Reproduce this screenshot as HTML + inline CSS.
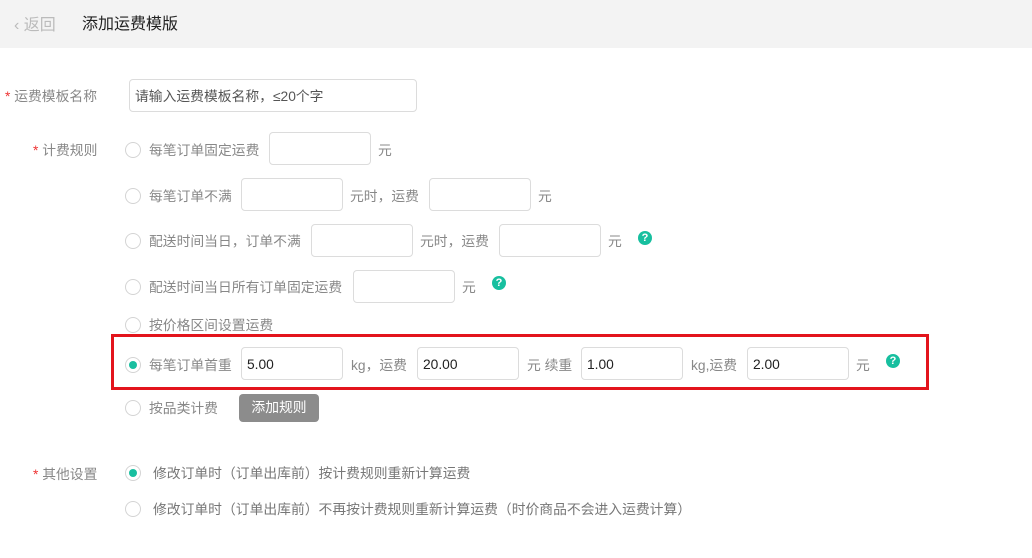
<!DOCTYPE html><html><head><meta charset="utf-8"><style>
body{margin:0;width:1032px;height:558px;background:#fff;font-family:"Liberation Sans","Noto Sans CJK SC",sans-serif;font-size:13.8px;color:#888;position:relative;overflow:hidden}
.a{position:absolute;white-space:nowrap;line-height:16px;top:0}
.hd{position:absolute;left:0;top:0;width:1032px;height:48px;background:#f3f3f3}
.in{position:absolute;box-sizing:border-box;border:1px solid #dcdcdc;border-radius:4px;height:33px;width:102px;background:#fff;color:#222;font-size:13.8px;padding-left:5px;line-height:33px}
.r{position:absolute;box-sizing:border-box;width:16px;height:16px;border:1px solid #d4d4d4;border-radius:50%;background:#fff}
.r.on::after{content:"";position:absolute;left:3px;top:3px;width:8px;height:8px;border-radius:50%;background:#19bfa0}
.q{position:absolute;width:14px;height:14px;border-radius:50%;background:#17bf9f;color:#fff;font-size:11px;font-weight:bold;text-align:center;line-height:14px}
.s{color:#e33}
</style></head><body>
<div class="hd"></div>
<div class="a" style="left:14px;top:17px;font-size:16px;color:#bbb;line-height:18px">&#8249;&nbsp;返回</div>
<div class="a" style="left:82px;top:16px;font-size:16px;color:#222;line-height:18px">添加运费模版</div>

<div class="a" style="left:5px;top:89px"><span class="s">*</span> 运费模板名称</div>
<div class="in" style="left:129px;top:79px;width:288px;color:#555">请输入运费模板名称，≤20个字</div>

<div class="a" style="left:33px;top:143px"><span class="s">*</span> 计费规则</div>

<div class="r" style="left:125px;top:142px"></div>
<div class="a" style="left:149px;top:143px">每笔订单固定运费</div>
<div class="in" style="left:269px;top:132px"></div>
<div class="a" style="left:378px;top:143px">元</div>

<div class="r" style="left:125px;top:188px"></div>
<div class="a" style="left:149px;top:189px">每笔订单不满</div>
<div class="in" style="left:241px;top:178px"></div>
<div class="a" style="left:350px;top:189px">元时，运费</div>
<div class="in" style="left:429px;top:178px"></div>
<div class="a" style="left:538px;top:189px">元</div>

<div class="r" style="left:125px;top:233px"></div>
<div class="a" style="left:149px;top:234px">配送时间当日，订单不满</div>
<div class="in" style="left:311px;top:224px"></div>
<div class="a" style="left:420px;top:234px">元时，运费</div>
<div class="in" style="left:499px;top:224px"></div>
<div class="a" style="left:608px;top:234px">元</div>
<div class="q" style="left:638px;top:231px">?</div>

<div class="r" style="left:125px;top:279px"></div>
<div class="a" style="left:149px;top:280px">配送时间当日所有订单固定运费</div>
<div class="in" style="left:353px;top:270px"></div>
<div class="a" style="left:462px;top:280px">元</div>
<div class="q" style="left:492px;top:276px">?</div>

<div class="r" style="left:125px;top:317px"></div>
<div class="a" style="left:149px;top:318px">按价格区间设置运费</div>

<div style="position:absolute;left:111px;top:334px;width:812px;height:50px;border:3px solid #e3141c"></div>
<div class="r on" style="left:125px;top:357px"></div>
<div class="a" style="left:149px;top:358px">每笔订单首重</div>
<div class="in" style="left:241px;top:347px">5.00</div>
<div class="a" style="left:351px;top:358px">kg，运费</div>
<div class="in" style="left:417px;top:347px">20.00</div>
<div class="a" style="left:527px;top:358px">元 续重</div>
<div class="in" style="left:581px;top:347px">1.00</div>
<div class="a" style="left:691px;top:358px">kg,运费</div>
<div class="in" style="left:747px;top:347px">2.00</div>
<div class="a" style="left:856px;top:358px">元</div>
<div class="q" style="left:886px;top:354px">?</div>

<div class="r" style="left:125px;top:400px"></div>
<div class="a" style="left:149px;top:401px">按品类计费</div>
<div style="position:absolute;left:239px;top:394px;width:80px;height:28px;background:#8c8c8c;border-radius:4px;color:#fff;text-align:center;line-height:28px">添加规则</div>

<div class="a" style="left:33px;top:467px"><span class="s">*</span> 其他设置</div>
<div class="r on" style="left:125px;top:465px"></div>
<div class="a" style="left:153px;top:466px;color:#777">修改订单时（订单出库前）按计费规则重新计算运费</div>
<div class="r" style="left:125px;top:501px"></div>
<div class="a" style="left:153px;top:502px;color:#777">修改订单时（订单出库前）不再按计费规则重新计算运费（时价商品不会进入运费计算）</div>
</body></html>
